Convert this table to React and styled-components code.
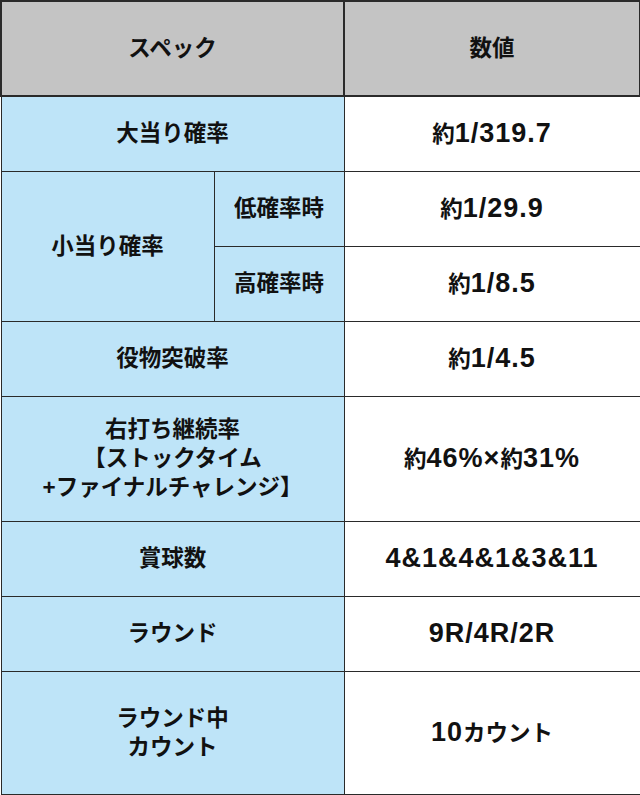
import React from "react";
import styled, { createGlobalStyle } from "styled-components";

const Global = createGlobalStyle`
  html, body { margin: 0; padding: 0; background: #fff; }
  body { font-family: "Liberation Sans", "Noto Sans CJK JP", sans-serif; }
`;

const Table = styled.table`
  width: 639px;
  height: 793px;
  border-collapse: collapse;
  table-layout: fixed;
  font-weight: 700;
  font-size: 22.5px;
  color: #111;
`;

const Row = styled.tr`
  height: ${(p) => p.$h}px;
`;

const Cell = styled.td`
  border: ${(p) => (p.$thick ? 2 : 1.5)}px solid #2a2a2a;
  background: ${(p) =>
    p.$kind === "head" ? "#c4c4c4" : p.$kind === "label" ? "#bee4f8" : "#ffffff"};
  text-align: center;
  vertical-align: middle;
  line-height: 29px;
  padding: 0 4px;
  font-weight: 700;
`;

const Num = styled.span`
  font-family: "Liberation Sans", sans-serif;
  font-size: 27px;
  letter-spacing: 1px;
`;

export default function App() {
  return (
    <>
      <Global />
      <Table>
        <colgroup>
          <col style={{ width: 213 }} />
          <col style={{ width: 130 }} />
          <col style={{ width: 296 }} />
        </colgroup>
        <tbody>
          <Row $h={95}>
            <Cell $kind="head" colSpan={2} $thick>スペック</Cell>
            <Cell $kind="head" $thick>数値</Cell>
          </Row>
          <Row $h={75}>
            <Cell $kind="label" colSpan={2}>大当り確率</Cell>
            <Cell>約<Num>1/319.7</Num></Cell>
          </Row>
          <Row $h={75}>
            <Cell $kind="label" rowSpan={2}>小当り確率</Cell>
            <Cell $kind="label">低確率時</Cell>
            <Cell>約<Num>1/29.9</Num></Cell>
          </Row>
          <Row $h={75}>
            <Cell $kind="label">高確率時</Cell>
            <Cell>約<Num>1/8.5</Num></Cell>
          </Row>
          <Row $h={75}>
            <Cell $kind="label" colSpan={2}>役物突破率</Cell>
            <Cell>約<Num>1/4.5</Num></Cell>
          </Row>
          <Row $h={125}>
            <Cell $kind="label" colSpan={2}>
              右打ち継続率
              <br />
              【ストックタイム
              <br />
              +ファイナルチャレンジ】
            </Cell>
            <Cell>約<Num>46%×</Num>約<Num>31%</Num></Cell>
          </Row>
          <Row $h={75}>
            <Cell $kind="label" colSpan={2}>賞球数</Cell>
            <Cell><Num>4&amp;1&amp;4&amp;1&amp;3&amp;11</Num></Cell>
          </Row>
          <Row $h={75}>
            <Cell $kind="label" colSpan={2}>ラウンド</Cell>
            <Cell><Num>9R/4R/2R</Num></Cell>
          </Row>
          <Row $h={123}>
            <Cell $kind="label" colSpan={2}>
              ラウンド中
              <br />
              カウント
            </Cell>
            <Cell><Num>10</Num>カウント</Cell>
          </Row>
        </tbody>
      </Table>
    </>
  );
}
